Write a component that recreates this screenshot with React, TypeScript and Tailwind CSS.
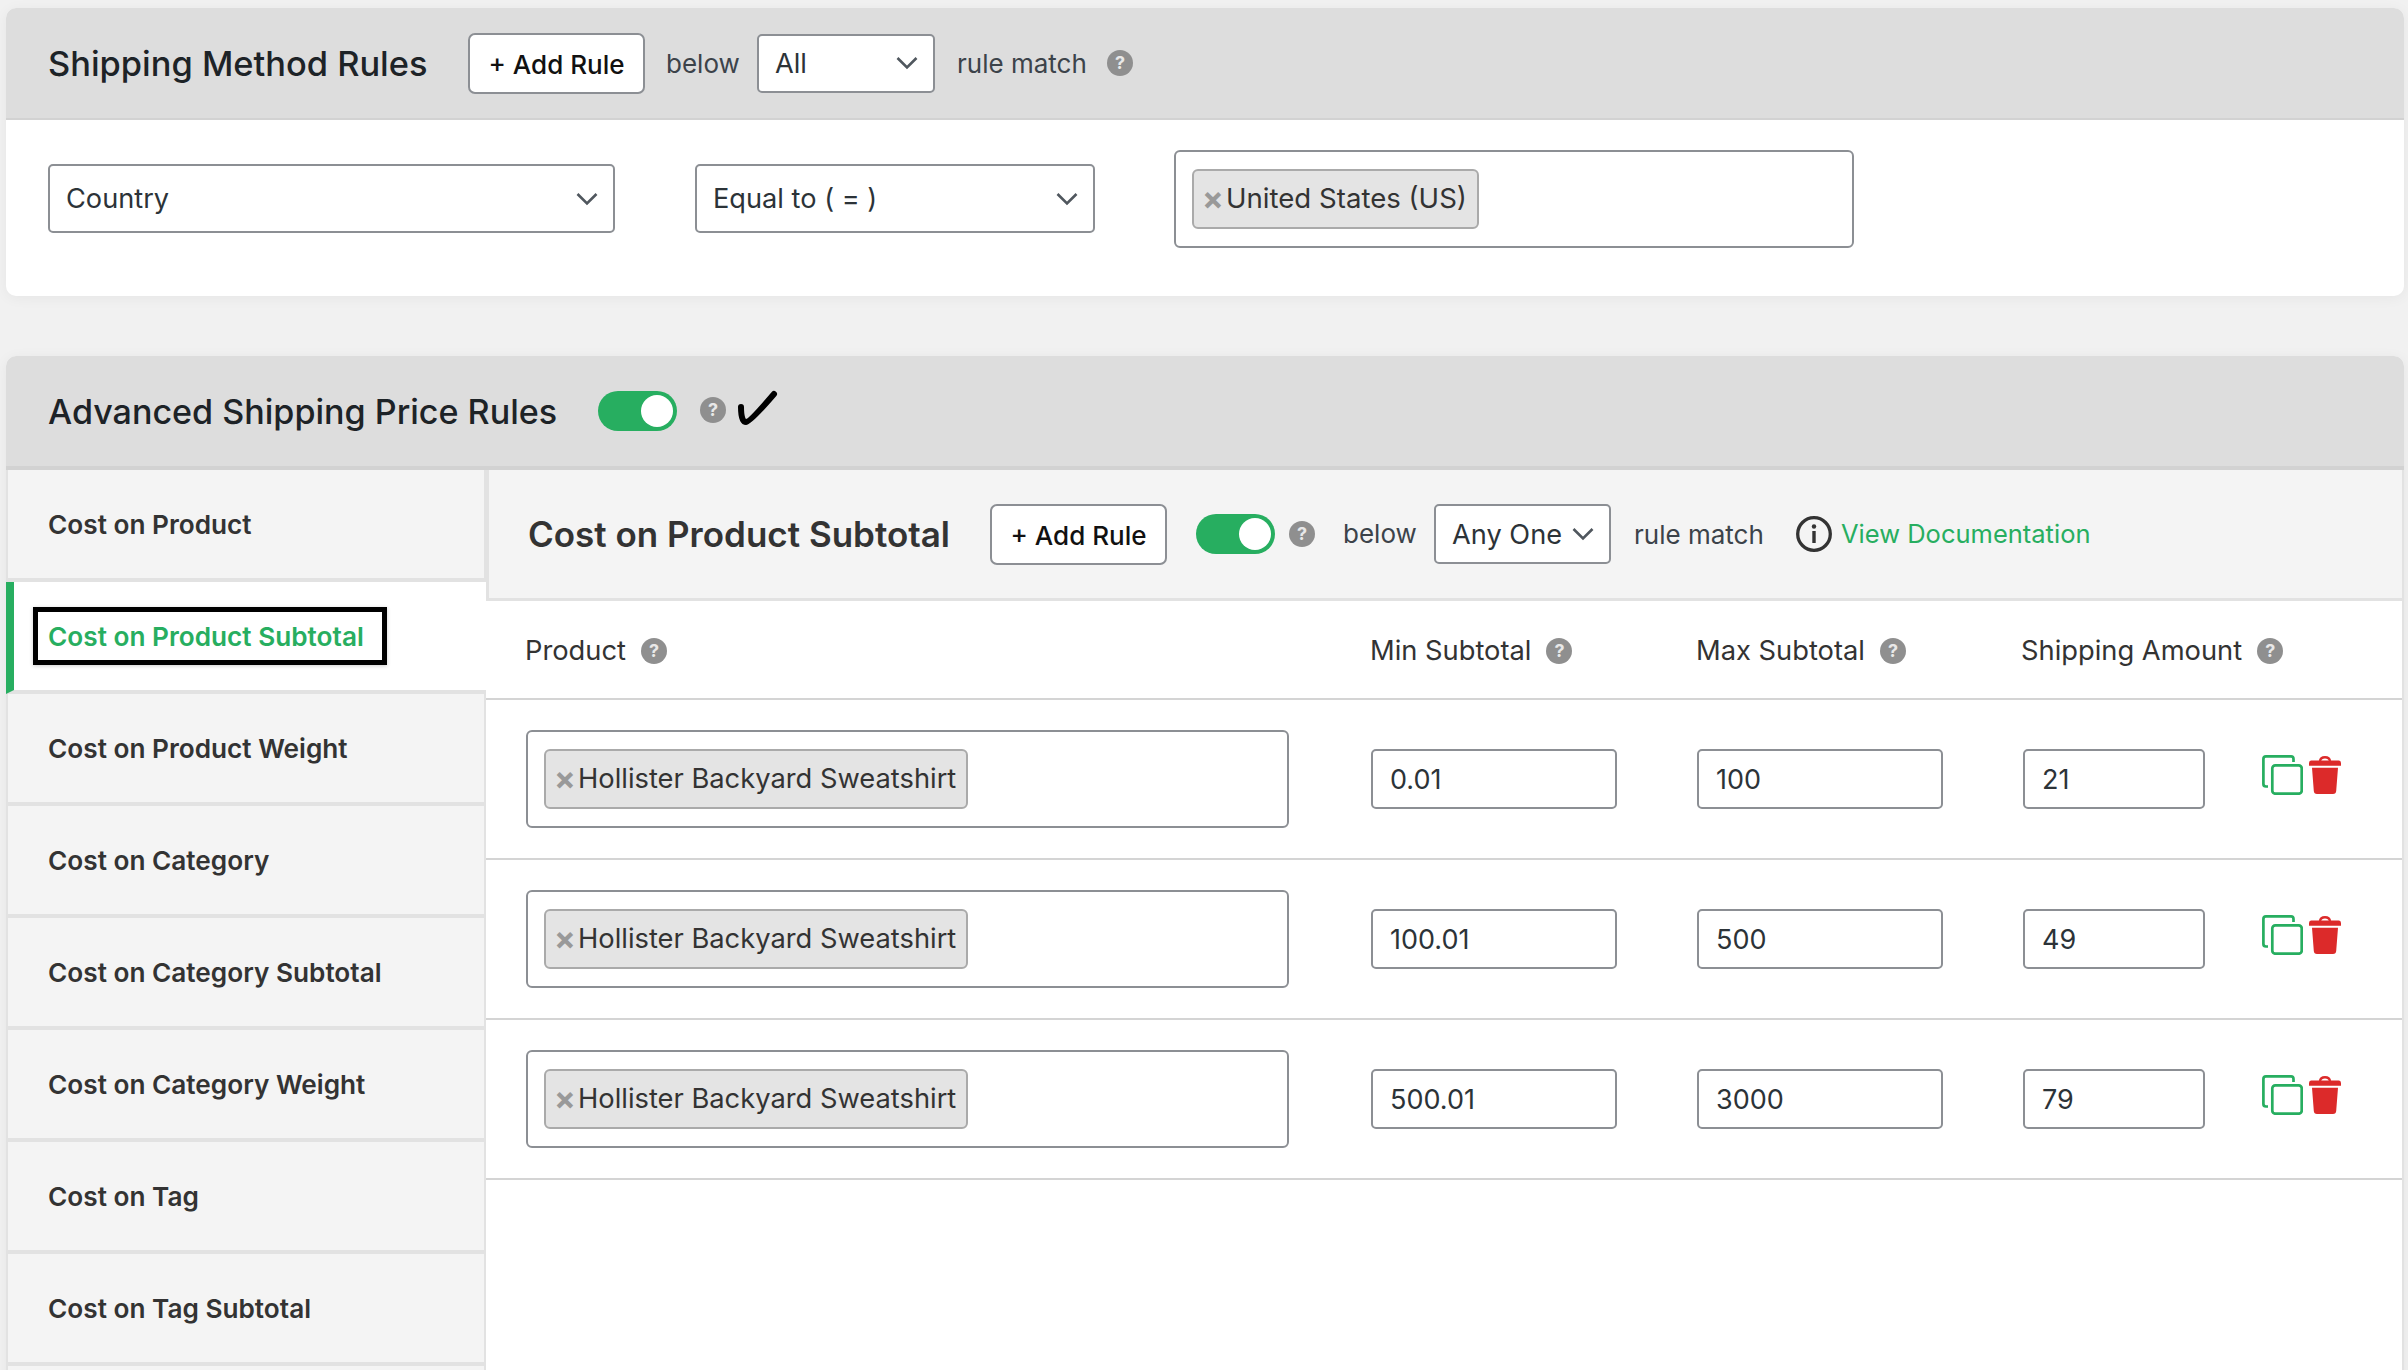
const sidebarItems = [
  'Cost on Product',
  'Cost on Product Subtotal',
  'Cost on Product Weight',
  'Cost on Category',
  'Cost on Category Subtotal',
  'Cost on Category Weight',
  'Cost on Tag',
  'Cost on Tag Subtotal',
  '',
];

const rows = [
  { min: '0.01', max: '100', amount: '21' },
  { min: '100.01', max: '500', amount: '49' },
  { min: '500.01', max: '3000', amount: '79' },
];

function Help({ className = '' }: { className?: string }) {
  return (
    <span className={`flex h-[26px] w-[26px] shrink-0 items-center justify-center rounded-full bg-[#8f8f8f] text-[18px] font-bold leading-none text-[#e8e8e8] ${className}`}>
      ?
    </span>
  );
}

function Chevron() {
  return (
    <svg width="22" height="14" viewBox="0 0 22 14" fill="none" className="shrink-0">
      <path d="M1.5 2 L11 11.5 L20.5 2" stroke="#50575e" strokeWidth="2.6" />
    </svg>
  );
}

function Select({ label, className }: { label: string; className: string }) {
  return (
    <div className={`flex shrink-0 items-center justify-between rounded-[5px] border-2 border-[#8c8f94] bg-white pl-[16px] pr-[15px] text-[27.2px] text-[#2c3338] ${className}`}>
      <span className="pt-[2px]">{label}</span>
      <Chevron />
    </div>
  );
}

function AddRule({ className }: { className: string }) {
  return (
    <button className={`flex h-[61px] shrink-0 items-center justify-center rounded-[7px] border-2 border-[#8c8f94] bg-white pt-[2px] text-[26px] font-medium text-[#111] ${className}`}>
      + Add Rule
    </button>
  );
}

function Tag({ label, className }: { label: string; className: string }) {
  return (
    <span className={`flex h-[60px] items-center rounded-[6px] border-2 border-[#aaaaaa] bg-[#e4e4e4] pl-[8px] pr-[10px] text-[#333] ${className}`}>
      <span className="mr-[4px] w-[20px] text-center text-[32px] font-bold leading-none text-[#999]">×</span>
      {label}
    </span>
  );
}

function MultiSelect({ label, className, tagClass }: { label: string; className: string; tagClass: string }) {
  return (
    <div className={`flex h-[98px] shrink-0 items-center rounded-[6px] border-2 border-[#8c8f94] bg-white pl-[16px] ${className}`}>
      <Tag label={label} className={tagClass} />
    </div>
  );
}

function Toggle() {
  return (
    <span className="flex h-[40px] w-[79px] shrink-0 items-center justify-end rounded-full bg-[#27ae60] pr-[4px]">
      <span className="h-[32px] w-[32px] rounded-full bg-white" />
    </span>
  );
}

function InfoIcon() {
  return (
    <svg width="36" height="36" viewBox="0 0 36 36" fill="none" className="shrink-0">
      <circle cx="18" cy="18" r="16.3" stroke="#333" strokeWidth="3.3" />
      <circle cx="18" cy="10.5" r="2.2" fill="#333" />
      <rect x="16.3" y="15" width="3.4" height="12" fill="#333" />
    </svg>
  );
}

function CopyIcon() {
  return (
    <svg width="41" height="40" viewBox="0 0 41 40" fill="none">
      <rect x="10.3" y="10.3" width="29.4" height="28.4" rx="3" stroke="#27ae60" strokeWidth="2.7" />
      <path d="M6 31.5 H4 Q1.4 31.5 1.4 29 V4 Q1.4 1.4 4 1.4 H29 Q31.5 1.4 31.5 4 V7" stroke="#27ae60" strokeWidth="2.7" />
    </svg>
  );
}

function TrashIcon() {
  return (
    <svg width="32" height="38" viewBox="0 0 32 38" fill="none">
      <path d="M11 5 Q11.5 1.2 16 1.2 Q20.5 1.2 21 5" stroke="#dc2a2a" strokeWidth="2.4" />
      <path d="M2 4.5 H30 Q32 4.5 32 7 V9.8 H0 V7 Q0 4.5 2 4.5 Z" fill="#dc2a2a" />
      <path d="M3 11.8 H29 L27.2 35 Q27 38 24 38 H8 Q5 38 4.8 35 Z" fill="#dc2a2a" />
    </svg>
  );
}

export default function App() {
  return (
    <div className="h-[1370px] w-[2408px] overflow-hidden bg-[#f1f1f1] pl-[6px] pt-[8px] font-['Inter',sans-serif] text-[#2c3338]">
      {/* Shipping method rules */}
      <section className="h-[288px] w-[2398px] overflow-hidden rounded-[10px] bg-white shadow-[0_2px_14px_rgba(0,0,0,0.05)]">
        <div className="flex h-[112px] items-center border-b-[2px] border-[#d2d2d2] bg-[#dddddd] pl-[42px]">
          <h2 className="w-[420px] shrink-0 pt-[1px] text-[34.4px] font-medium text-[#1d2327]">Shipping Method Rules</h2>
          <AddRule className="w-[177px]" />
          <span className="ml-[21px] w-[91px] shrink-0 text-[26px] text-[#3c434a]">below</span>
          <Select label="All" className="h-[59px] w-[178px]" />
          <span className="ml-[22px] w-[150px] shrink-0 text-[26px] text-[#3c434a]">rule match</span>
          <Help />
        </div>
        <div className="flex h-[176px] items-start pl-[42px] pt-[30px]">
          <Select label="Country" className="mt-[14px] h-[69px] w-[567px]" />
          <Select label="Equal to ( = )" className="ml-[80px] mt-[14px] h-[69px] w-[400px]" />
          <MultiSelect label="United States (US)" tagClass="text-[27.6px]" className="ml-[79px] w-[680px]" />
        </div>
      </section>

      {/* Advanced shipping price rules */}
      <section className="mt-[60px] w-[2398px] rounded-t-[10px] bg-white shadow-[0_2px_14px_rgba(0,0,0,0.05)]">
        <div className="flex h-[114px] items-center rounded-t-[10px] border-b-[4px] border-[#d2d2d2] bg-[#dddddd] pl-[42px]">
          <h2 className="w-[550px] shrink-0 pt-[2px] text-[34.1px] font-medium text-[#1d2327]">Advanced Shipping Price Rules</h2>
          <Toggle />
          <Help className="ml-[23px] -mt-[2px]" />
          <svg width="42" height="38" viewBox="0 0 42 38" fill="none" className="ml-[10px] -mt-[6px]">
            <path d="M5 18 Q5 33 10 33 Q14 33 38 5" stroke="#000" strokeWidth="6" strokeLinecap="round" />
          </svg>
        </div>
        <div className="flex">
          <nav className="w-[480px] shrink-0">
            {sidebarItems.map((item, i) => (
              i === 1 ? (
                <div key={i} className="flex h-[112px] items-center border-b-4 border-l-8 border-b-[#e2e2e2] border-l-[#27ae60] bg-white pl-[19px]">
                  <span className="flex h-[58px] items-center border-[5px] border-black pl-[10px] pr-[18px] pt-[2px] text-[26.2px] font-semibold text-[#27ae60] shadow-[0_1px_4px_rgba(0,0,0,0.2)]">
                    {item}
                  </span>
                </div>
              ) : (
                <div key={i} className="flex h-[112px] items-center border-x-2 border-b-4 border-x-[#e2e2e2] border-b-[#e2e2e2] bg-[#f4f4f4] pl-[40px] pt-[2px] text-[26.2px] font-semibold text-[#333]">
                  {item}
                </div>
              )
            ))}
          </nav>
          <main className="flex-1 border-r-2 border-[#e2e2e2] bg-white">
            <div className="flex h-[131px] items-center border-b-[3px] border-l-[3px] border-[#e2e2e2] bg-[#f4f4f4] pl-[39px]">
              <h3 className="w-[462px] shrink-0 text-[35px] font-semibold text-[#333]">Cost on Product Subtotal</h3>
              <AddRule className="w-[177px]" />
              <span className="ml-[29px]"><Toggle /></span>
              <Help className="ml-[14px]" />
              <span className="ml-[28px] w-[91px] shrink-0 -translate-y-[1px] text-[26px] text-[#3c434a]">below</span>
              <Select label="Any One" className="h-[60px] w-[177px]" />
              <span className="ml-[23px] w-[162px] shrink-0 text-[26px] text-[#3c434a]">rule match</span>
              <InfoIcon />
              <span className="ml-[9px] text-[25.5px] text-[#27ae60]">View Documentation</span>
            </div>
            <div className="flex h-[99px] items-center border-b-2 border-[#d4d4d4] pl-[39px] pt-[3px] text-[27.3px] text-[#333]">
              <span className="flex w-[845px] shrink-0 items-center gap-[15px]">Product <Help /></span>
              <span className="flex w-[326px] shrink-0 items-center gap-[15px]">Min Subtotal <Help /></span>
              <span className="flex w-[325px] shrink-0 items-center gap-[15px]">Max Subtotal <Help /></span>
              <span className="flex shrink-0 items-center gap-[15px]">Shipping Amount <Help /></span>
            </div>
            {rows.map((row) => (
              <div key={row.min} className="flex h-[160px] items-center border-b-2 border-[#d4d4d4] pl-[40px]">
                <MultiSelect label="Hollister Backyard Sweatshirt" tagClass="text-[27.3px]" className="w-[763px]" />
                <input readOnly value={row.min} className="ml-[82px] h-[60px] w-[246px] rounded-[5px] border-2 border-[#8c8f94] pl-[17px] text-[27px] text-[#2c3338]" />
                <input readOnly value={row.max} className="ml-[80px] h-[60px] w-[246px] rounded-[5px] border-2 border-[#8c8f94] pl-[17px] text-[27px] text-[#2c3338]" />
                <input readOnly value={row.amount} className="ml-[80px] h-[60px] w-[182px] rounded-[5px] border-2 border-[#8c8f94] pl-[17px] text-[27px] text-[#2c3338]" />
                <span className="ml-[57px] -mt-[9px]"><CopyIcon /></span>
                <span className="ml-[6px] -mt-[9px]"><TrashIcon /></span>
              </div>
            ))}
          </main>
        </div>
      </section>
    </div>
  );
}
